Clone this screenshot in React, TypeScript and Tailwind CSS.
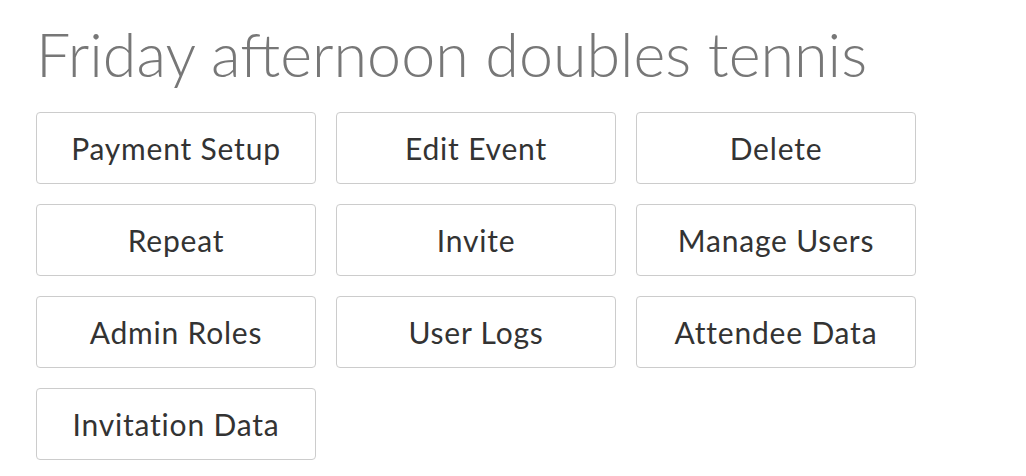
export default function App() {
  const buttons = [
    "Payment Setup",
    "Edit Event",
    "Delete",
    "Repeat",
    "Invite",
    "Manage Users",
    "Admin Roles",
    "User Logs",
    "Attendee Data",
    "Invitation Data",
  ];
  return (
    <div className="w-[1026px] h-[476px] bg-white pl-[36px] pt-[14px]" style={{ fontFamily: "Lato, 'Open Sans', sans-serif" }}>
      <h1 className="text-[61px] leading-[80px] font-light text-[#777777] whitespace-nowrap">Friday afternoon doubles tennis</h1>
      <div className="mt-[18px] grid grid-cols-[280px_280px_280px] gap-x-[20px] gap-y-[20px]">
        {buttons.map((b) => (
          <button
            key={b}
            className="h-[72px] border border-[#cccccc] rounded-[4px] bg-white text-[30px] tracking-[0.8px] text-[#333333] flex items-center justify-center"
          >
            {b}
          </button>
        ))}
      </div>
    </div>
  );
}
